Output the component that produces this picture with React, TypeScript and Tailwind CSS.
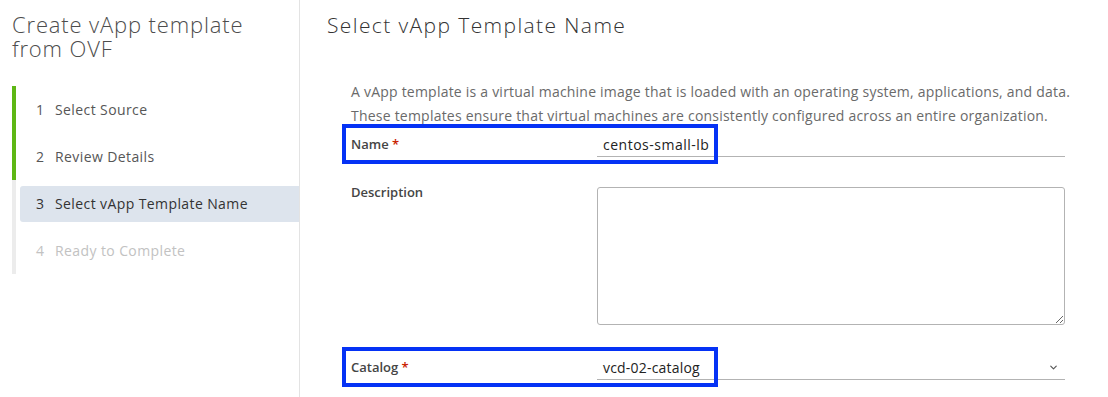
import { ChevronDown } from "lucide-react";

const steps = [
  { n: 1, label: "Select Source", state: "done" },
  { n: 2, label: "Review Details", state: "done" },
  { n: 3, label: "Select vApp Template Name", state: "current" },
  { n: 4, label: "Ready to Complete", state: "todo" },
];

function Highlight() {
  // annotation box drawn over the row
  return (
    <div className="pointer-events-none absolute -left-[9px] -top-[8px] h-[40px] w-[376px] border-[4px] border-[#0532f5]" />
  );
}

export default function App() {
  return (
    <div
      className="flex h-[397px] w-[1108px] overflow-hidden bg-white"
      style={{ fontFamily: '"Open Sans", "Liberation Sans", sans-serif' }}
    >
      {/* Sidebar */}
      <aside className="w-[300px] shrink-0 border-r border-[#e3e3e3] pl-[12px] pt-[12px]">
        <h1 className="text-[22px] leading-[24px] font-light tracking-[0.85px] text-[#4d4d4d]">
          <div className="h-[24px]">Create vApp template</div>
          <div className="h-[24px]">from OVF</div>
        </h1>
        <ul className="mt-[26px]">
          {steps.map((s) => (
            <li
              key={s.n}
              className={`flex h-[47px] items-center border-l-[4px] ${
                s.state === "done" ? "border-[#5eb715]" : "border-[#ececec]"
              }`}
            >
              <div
                className={`ml-[4px] flex h-[36px] flex-1 items-center rounded-l-[3px] pl-[16px] text-[14px] tracking-[0.4px] ${
                  s.state === "current"
                    ? "bg-[#dde4ed] text-[#333]"
                    : s.state === "done"
                    ? "text-[#565656]"
                    : "text-[#c2c2c2]"
                }`}
              >
                <span className="w-[19px]">{s.n}</span>
                <span>{s.label}</span>
              </div>
            </li>
          ))}
        </ul>
      </aside>

      {/* Main */}
      <main className="flex-1 pl-[27px] pt-[13px]">
        <h2 className="text-[21px] leading-[24px] font-light tracking-[1.4px] text-[#333]">Select vApp Template Name</h2>
        <div className="pl-[24px]">
          <p className="mt-[43px] text-[14px] leading-[24px] text-[#6a6a6a] tracking-[0.22px] whitespace-nowrap">
            A vApp template is a virtual machine image that is loaded with an operating system, applications, and data.
            <br />
            These templates ensure that virtual machines are consistently configured across an entire organization.
          </p>

          <div className="w-[714px]">
            {/* Name */}
            <div className="relative mt-[4px] grid h-[25px] grid-cols-[246px_1fr] items-center">
              <label className="text-[13px] font-semibold text-[#454545]">
                Name <span className="text-[#c92100]">*</span>
              </label>
              <div className="flex h-[25px] items-center border-b border-[#b3b3b3] pl-[6px] text-[14px] tracking-[0.5px] text-[#222]">
                centos-small-lb
              </div>
              <Highlight />
            </div>

            {/* Description */}
            <div className="mt-[30px] grid grid-cols-[246px_1fr]">
              <label className="-mt-[4px] text-[13px] font-semibold text-[#454545]">Description</label>
              <textarea className="h-[138px] w-full rounded-[3px] border border-[#b3b3b3] bg-white" />
            </div>

            {/* Catalog */}
            <div className="relative mt-[30px] grid h-[25px] grid-cols-[246px_1fr] items-center">
              <label className="text-[13px] font-semibold text-[#454545]">
                Catalog <span className="text-[#c92100]">*</span>
              </label>
              <div className="flex h-[25px] items-center justify-between border-b border-[#b3b3b3] pl-[6px] pr-[6px] text-[14px] tracking-[0.2px] text-[#222]">
                <span>vcd-02-catalog</span>
                <ChevronDown size={11} strokeWidth={2.5} className="text-[#555]" />
              </div>
              <Highlight />
            </div>
          </div>
        </div>
      </main>
    </div>
  );
}
